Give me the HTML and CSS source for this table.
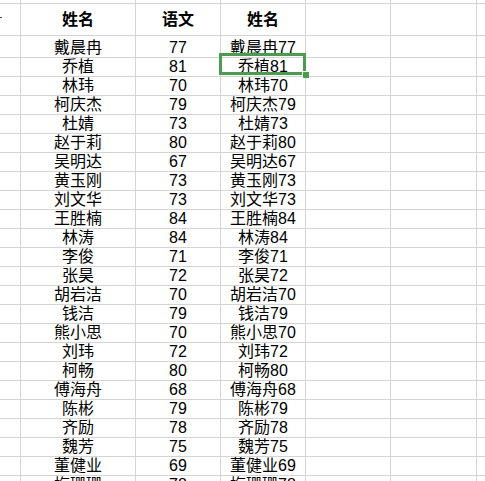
FILE: index.html
```html
<!DOCTYPE html>
<html lang="zh">
<head>
<meta charset="utf-8">
<link rel="stylesheet" href="styles.css">
</head>
<body>
<div class="sheet">
  <div class="row row-top">
    <div class="cell c0"></div><div class="cell c1"></div><div class="cell c2"></div><div class="cell c3"></div><div class="cell c4"></div><div class="cell c5"></div><div class="cell c6"></div>
  </div>
  <div class="row row-head">
    <div class="cell c0"><span class="tick"></span></div><div class="cell c1 head">姓名</div><div class="cell c2 head">语文</div><div class="cell c3 head">姓名</div><div class="cell c4"></div><div class="cell c5"></div><div class="cell c6"></div>
  </div>
  <div class="row"><div class="cell c0"></div><div class="cell c1">戴晨冉</div><div class="cell c2">77</div><div class="cell c3">戴晨冉77</div><div class="cell c4"></div><div class="cell c5"></div><div class="cell c6"></div></div>
  <div class="row"><div class="cell c0"></div><div class="cell c1">乔植</div><div class="cell c2">81</div><div class="cell c3 selected">乔植81<span class="sel-box"></span><span class="sel-handle"></span></div><div class="cell c4"></div><div class="cell c5"></div><div class="cell c6"></div></div>
  <div class="row"><div class="cell c0"></div><div class="cell c1">林玮</div><div class="cell c2">70</div><div class="cell c3">林玮70</div><div class="cell c4"></div><div class="cell c5"></div><div class="cell c6"></div></div>
  <div class="row"><div class="cell c0"></div><div class="cell c1">柯庆杰</div><div class="cell c2">79</div><div class="cell c3">柯庆杰79</div><div class="cell c4"></div><div class="cell c5"></div><div class="cell c6"></div></div>
  <div class="row"><div class="cell c0"></div><div class="cell c1">杜婧</div><div class="cell c2">73</div><div class="cell c3">杜婧73</div><div class="cell c4"></div><div class="cell c5"></div><div class="cell c6"></div></div>
  <div class="row"><div class="cell c0"></div><div class="cell c1">赵于莉</div><div class="cell c2">80</div><div class="cell c3">赵于莉80</div><div class="cell c4"></div><div class="cell c5"></div><div class="cell c6"></div></div>
  <div class="row"><div class="cell c0"></div><div class="cell c1">吴明达</div><div class="cell c2">67</div><div class="cell c3">吴明达67</div><div class="cell c4"></div><div class="cell c5"></div><div class="cell c6"></div></div>
  <div class="row"><div class="cell c0"></div><div class="cell c1">黄玉刚</div><div class="cell c2">73</div><div class="cell c3">黄玉刚73</div><div class="cell c4"></div><div class="cell c5"></div><div class="cell c6"></div></div>
  <div class="row"><div class="cell c0"></div><div class="cell c1">刘文华</div><div class="cell c2">73</div><div class="cell c3">刘文华73</div><div class="cell c4"></div><div class="cell c5"></div><div class="cell c6"></div></div>
  <div class="row"><div class="cell c0"></div><div class="cell c1">王胜楠</div><div class="cell c2">84</div><div class="cell c3">王胜楠84</div><div class="cell c4"></div><div class="cell c5"></div><div class="cell c6"></div></div>
  <div class="row"><div class="cell c0"></div><div class="cell c1">林涛</div><div class="cell c2">84</div><div class="cell c3">林涛84</div><div class="cell c4"></div><div class="cell c5"></div><div class="cell c6"></div></div>
  <div class="row"><div class="cell c0"></div><div class="cell c1">李俊</div><div class="cell c2">71</div><div class="cell c3">李俊71</div><div class="cell c4"></div><div class="cell c5"></div><div class="cell c6"></div></div>
  <div class="row"><div class="cell c0"></div><div class="cell c1">张昊</div><div class="cell c2">72</div><div class="cell c3">张昊72</div><div class="cell c4"></div><div class="cell c5"></div><div class="cell c6"></div></div>
  <div class="row"><div class="cell c0"></div><div class="cell c1">胡岩洁</div><div class="cell c2">70</div><div class="cell c3">胡岩洁70</div><div class="cell c4"></div><div class="cell c5"></div><div class="cell c6"></div></div>
  <div class="row"><div class="cell c0"></div><div class="cell c1">钱洁</div><div class="cell c2">79</div><div class="cell c3">钱洁79</div><div class="cell c4"></div><div class="cell c5"></div><div class="cell c6"></div></div>
  <div class="row"><div class="cell c0"></div><div class="cell c1">熊小思</div><div class="cell c2">70</div><div class="cell c3">熊小思70</div><div class="cell c4"></div><div class="cell c5"></div><div class="cell c6"></div></div>
  <div class="row"><div class="cell c0"></div><div class="cell c1">刘玮</div><div class="cell c2">72</div><div class="cell c3">刘玮72</div><div class="cell c4"></div><div class="cell c5"></div><div class="cell c6"></div></div>
  <div class="row"><div class="cell c0"></div><div class="cell c1">柯畅</div><div class="cell c2">80</div><div class="cell c3">柯畅80</div><div class="cell c4"></div><div class="cell c5"></div><div class="cell c6"></div></div>
  <div class="row"><div class="cell c0"></div><div class="cell c1">傅海舟</div><div class="cell c2">68</div><div class="cell c3">傅海舟68</div><div class="cell c4"></div><div class="cell c5"></div><div class="cell c6"></div></div>
  <div class="row"><div class="cell c0"></div><div class="cell c1">陈彬</div><div class="cell c2">79</div><div class="cell c3">陈彬79</div><div class="cell c4"></div><div class="cell c5"></div><div class="cell c6"></div></div>
  <div class="row"><div class="cell c0"></div><div class="cell c1">齐励</div><div class="cell c2">78</div><div class="cell c3">齐励78</div><div class="cell c4"></div><div class="cell c5"></div><div class="cell c6"></div></div>
  <div class="row"><div class="cell c0"></div><div class="cell c1">魏芳</div><div class="cell c2">75</div><div class="cell c3">魏芳75</div><div class="cell c4"></div><div class="cell c5"></div><div class="cell c6"></div></div>
  <div class="row"><div class="cell c0"></div><div class="cell c1">董健业</div><div class="cell c2">69</div><div class="cell c3">董健业69</div><div class="cell c4"></div><div class="cell c5"></div><div class="cell c6"></div></div>
  <div class="row"><div class="cell c0"></div><div class="cell c1">梅珊珊</div><div class="cell c2">78</div><div class="cell c3">梅珊珊78</div><div class="cell c4"></div><div class="cell c5"></div><div class="cell c6"></div></div>
</div>
</body>
</html>
```

FILE: styles.css
```css
html, body {
  margin: 0;
  padding: 0;
  background: #ffffff;
  overflow: hidden;
}

.sheet {
  width: 485px;
  height: 481px;
  overflow: hidden;
  font-family: "Liberation Sans", "Noto Sans CJK SC", sans-serif;
  font-size: 16px;
  color: #000000;
}

.row {
  display: grid;
  grid-template-columns: 21px 115px 85px 85px 85px 86px 1fr;
  height: 19px;
}

.row-top {
  height: 4px;
}

.row-head {
  height: 32px;
}

.cell {
  box-sizing: border-box;
  border-right: 1px solid #d4d4d4;
  border-bottom: 1px solid #d4d4d4;
  display: flex;
  align-items: center;
  justify-content: center;
  padding-top: 3px;
  line-height: 18px;
  white-space: nowrap;
  overflow: visible;
}

.row-top .cell {
  padding-top: 0;
}

.row-head .cell {
  padding-top: 0;
}

.c6 {
  border-right: none;
}

.head {
  font-weight: bold;
  font-size: 16px;
}

.c0 {
  position: relative;
}

.tick {
  position: absolute;
  left: 0;
  top: 13px;
  width: 2px;
  height: 1px;
  background: #555555;
}

.selected {
  position: relative;
}

.sel-box {
  position: absolute;
  left: -2px;
  top: -2px;
  width: 87px;
  height: 22px;
  box-sizing: border-box;
  border: 3px solid #4a9c50;
}

.sel-handle {
  position: absolute;
  left: 81px;
  top: 16px;
  width: 6px;
  height: 6px;
  background: #4a9c50;
  border-left: 1px solid #ffffff;
  border-top: 1px solid #ffffff;
}
```
